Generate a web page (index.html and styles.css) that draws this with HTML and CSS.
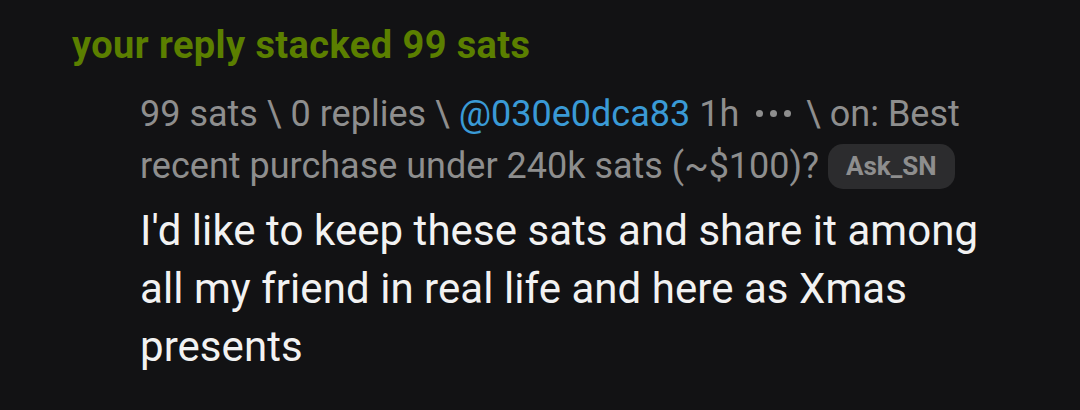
FILE: index.html
```html
<!DOCTYPE html>
<html>
<head>
<meta charset="utf-8">
<link rel="stylesheet" href="styles.css">
</head>
<body>
<div class="notification">
  <div class="title">your reply stacked 99 sats</div>
  <div class="comment">
    <div class="meta">99 sats \ 0 replies \ <span class="user">@030e0dca83</span> 1h <span class="dots"><i></i><i></i><i></i></span> \ on: Best recent purchase under 240k sats (~$100)? <span class="badge">Ask_SN</span></div>
    <div class="text">I'd like to keep these sats and share it among all my friend in real life and here as Xmas presents</div>
  </div>
</div>
</body>
</html>
```
FILE: styles.css
```css
html, body {
  margin: 0;
  padding: 0;
  background: #121214;
  font-family: Roboto, "Noto Sans", sans-serif;
}
.notification {
  padding: 23px 0 0 72px;
}
.title {
  color: #5b7f00;
  font-weight: 700;
  font-size: 38px;
  line-height: 44px;
  letter-spacing: 0.4px;
}
.comment {
  padding: 21px 0 0 68px;
  width: 850px;
}
.meta {
  color: #8e8e8e;
  font-size: 36px;
  line-height: 52px;
}
.user {
  color: #3a9ad6;
}
.dots {
  display: inline-flex;
  gap: 7px;
  margin: 0 6px 0 8px;
  vertical-align: 9px;
}
.dots i {
  display: block;
  width: 7px;
  height: 7px;
  border-radius: 50%;
  background: #8e8e8e;
}
.badge {
  display: inline-block;
  background: #2c2c2e;
  color: #8e8e8e;
  font-weight: 700;
  font-size: 26px;
  line-height: 45px;
  padding: 0 18px;
  border-radius: 15px;
  margin-left: 0;
  vertical-align: 3px;
}
.text {
  color: #f2f2f2;
  font-size: 42px;
  line-height: 58px;
  letter-spacing: 0.05px;
  margin-top: 10px;
}
```
